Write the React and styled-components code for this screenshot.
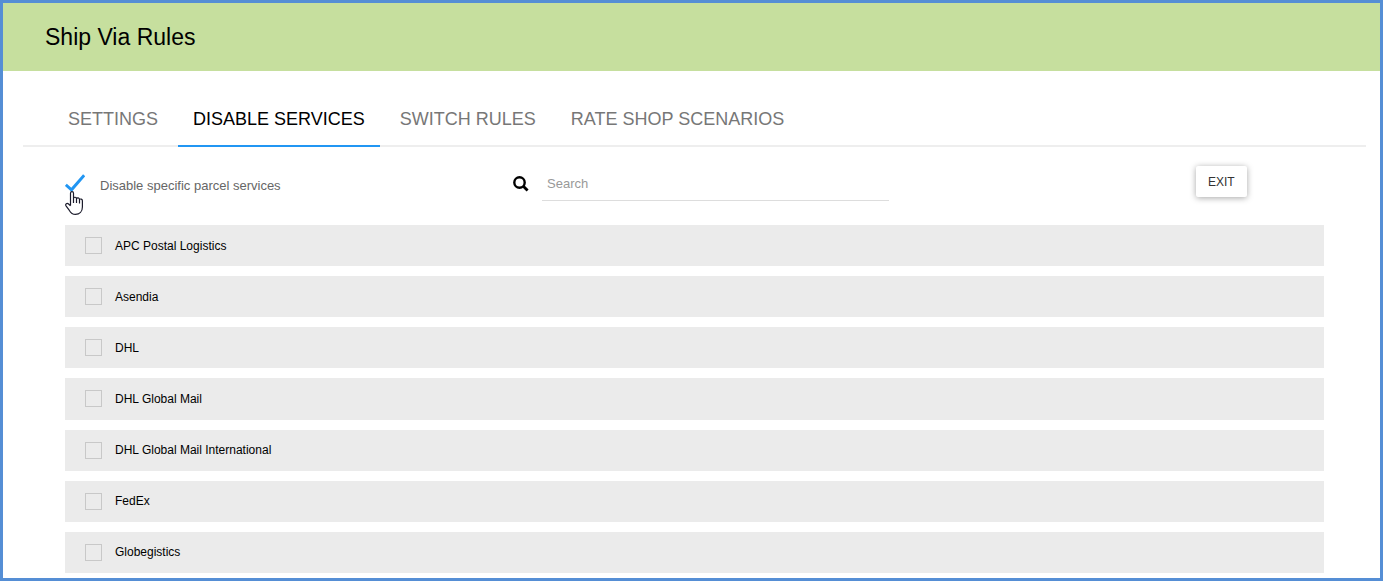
import React, { useState } from "react";
import styled, { createGlobalStyle } from "styled-components";

const GlobalStyle = createGlobalStyle`
  *, *::before, *::after { box-sizing: border-box; }
  body {
    margin: 0;
    background: #fff;
    color: #000;
    font-family: "Liberation Sans", Arial, sans-serif;
    font-size: 12px;
  }
`;

const Page = styled.div`
  display: flex;
  flex-direction: column;
  min-height: 100vh;
  border: 3px solid #558ed5;
`;

const Header = styled.header`
  background: #c6df9e;
  padding: 20px 42px;
`;

const Title = styled.h1`
  margin: 0;
  font-size: 23px;
  line-height: 28px;
  font-weight: 400;
`;

const Tabs = styled.nav`
  display: flex;
  gap: 5px;
  margin: 20px 14px 0 20px;
  padding-left: 30px;
  border-bottom: 2px solid #eee;
`;

const Tab = styled.a`
  padding: 16px 15px 14px;
  margin-bottom: -2px;
  border-bottom: 2px solid ${(p) => (p.$active ? "#2196f3" : "transparent")};
  color: ${(p) => (p.$active ? "#000" : "#777")};
  font-size: 18px;
  line-height: 24px;
  text-decoration: none;
  white-space: nowrap;
`;

const Content = styled.main`
  flex: 1;
  display: flex;
  flex-direction: column;
  padding: 0 56px 5px 62px;
`;

const Toolbar = styled.div`
  display: grid;
  grid-template-columns: 448fr 683fr 128fr;
  align-items: start;
  padding: 19px 0 24px;
`;

const ToggleLabel = styled.label`
  position: relative;
  display: flex;
  align-items: center;
  gap: 15px;
  padding-top: 8px;
  color: #666;
  font-size: 13px;
  line-height: 24px;
`;

const ToggleMark = styled.span`
  display: grid;
  width: 20px;
  height: 24px;

  & > * { grid-area: 1 / 1; }
`;

const ToggleInput = styled.input`
  appearance: none;
  width: 20px;
  height: 20px;
  margin: 0;
`;

const CheckIcon = styled.svg`
  width: 20px;
  height: 20px;
  pointer-events: none;
  visibility: ${(p) => (p.$on ? "visible" : "hidden")};
`;

const Pointer = styled.svg`
  position: absolute;
  left: 0;
  top: 25px;
  width: 18px;
  height: 24px;
  pointer-events: none;
`;

const Search = styled.label`
  display: flex;
  align-items: center;
  gap: 13px;
  width: 55%;
`;

const SearchIcon = styled.svg`
  flex: none;
  width: 16px;
  height: 16px;
`;

const SearchInput = styled.input`
  flex: 1;
  min-width: 0;
  height: 35px;
  padding: 0 5px;
  border: 0;
  border-bottom: 1px solid #ddd;
  outline: 0;
  background: transparent;
  color: #333;
  font: 13px "Liberation Sans", Arial, sans-serif;

  &::placeholder { color: #999; opacity: 1; }
`;

const ExitButton = styled.button`
  justify-self: start;
  height: 31px;
  padding: 0 12px;
  border: 0;
  border-radius: 2px;
  background: #fff;
  color: #333;
  box-shadow: 0 1px 6px rgba(0, 0, 0, 0.35);
  font: 12px "Liberation Sans", Arial, sans-serif;
`;

const CarrierList = styled.ul`
  flex: 1;
  display: grid;
  grid-auto-rows: minmax(41px, 1fr);
  gap: 10px;
  margin: 0;
  padding: 0;
  list-style: none;
`;

const CarrierRow = styled.li`
  display: flex;
  background: #ebebeb;
`;

const CarrierLabel = styled.label`
  display: flex;
  align-items: center;
  gap: 13px;
  padding: 0 20px;
`;

const CarrierBox = styled.input`
  appearance: none;
  width: 17px;
  height: 17px;
  margin: 0;
  border: 1px solid #c8c8c8;

  &:checked { background: #2196f3; }
`;

const tabs = ["SETTINGS", "DISABLE SERVICES", "SWITCH RULES", "RATE SHOP SCENARIOS"];

const carriers = [
  "APC Postal Logistics",
  "Asendia",
  "DHL",
  "DHL Global Mail",
  "DHL Global Mail International",
  "FedEx",
  "Globegistics",
];

export default function App() {
  const [enabled, setEnabled] = useState(true);
  return (
    <>
      <GlobalStyle />
      <Page>
        <Header>
          <Title>Ship Via Rules</Title>
        </Header>
        <Tabs>
          {tabs.map((name) => (
            <Tab key={name} href="#" $active={name === "DISABLE SERVICES"}>
              {name}
            </Tab>
          ))}
        </Tabs>
        <Content>
          <Toolbar>
            <ToggleLabel>
              <ToggleMark>
                <ToggleInput
                  type="checkbox"
                  checked={enabled}
                  onChange={(e) => setEnabled(e.target.checked)}
                />
                <CheckIcon viewBox="0 0 20 20" $on={enabled} aria-hidden="true">
                  <path d="M0.8 10.8 L6.5 15.8 L19.2 1.2" fill="none" stroke="#2196f3" strokeWidth="3" />
                </CheckIcon>
              </ToggleMark>
              Disable specific parcel services
              <Pointer viewBox="0 0 18 24" aria-hidden="true">
                <path
                  d="M5.5 14.5V2.2C5.5 0.2 8.5 0.2 8.5 2.2V7.2C9 5.8 11.4 6 11.5 7.6C12.2 6.4 14.3 6.8 14.5 8.4C15.4 7.6 17.4 8 17.4 9.8V16C17.4 20.5 14.5 23.4 10.5 23.4C7 23.4 5.5 21.5 4.2 19.2L1 14.8C0 13 2 11.6 3.6 13L5.5 14.9M8.5 7V12M11.5 7.5V12M14.5 8.4V12.5"
                  fill="#fff"
                  stroke="#1b1b2b"
                  strokeWidth="1.2"
                  strokeLinejoin="round"
                />
              </Pointer>
            </ToggleLabel>
            <Search aria-label="Search">
              <SearchIcon viewBox="0 0 16 16" aria-hidden="true">
                <circle cx="6.5" cy="6.5" r="5.2" fill="none" stroke="#000" strokeWidth="2.4" />
                <path d="M10.3 10.3 L14.6 14.6" stroke="#000" strokeWidth="2.8" />
              </SearchIcon>
              <SearchInput type="text" placeholder="Search" />
            </Search>
            <ExitButton type="button">EXIT</ExitButton>
          </Toolbar>
          <CarrierList>
            {carriers.map((name) => (
              <CarrierRow key={name}>
                <CarrierLabel>
                  <CarrierBox type="checkbox" />
                  {name}
                </CarrierLabel>
              </CarrierRow>
            ))}
          </CarrierList>
        </Content>
      </Page>
    </>
  );
}
